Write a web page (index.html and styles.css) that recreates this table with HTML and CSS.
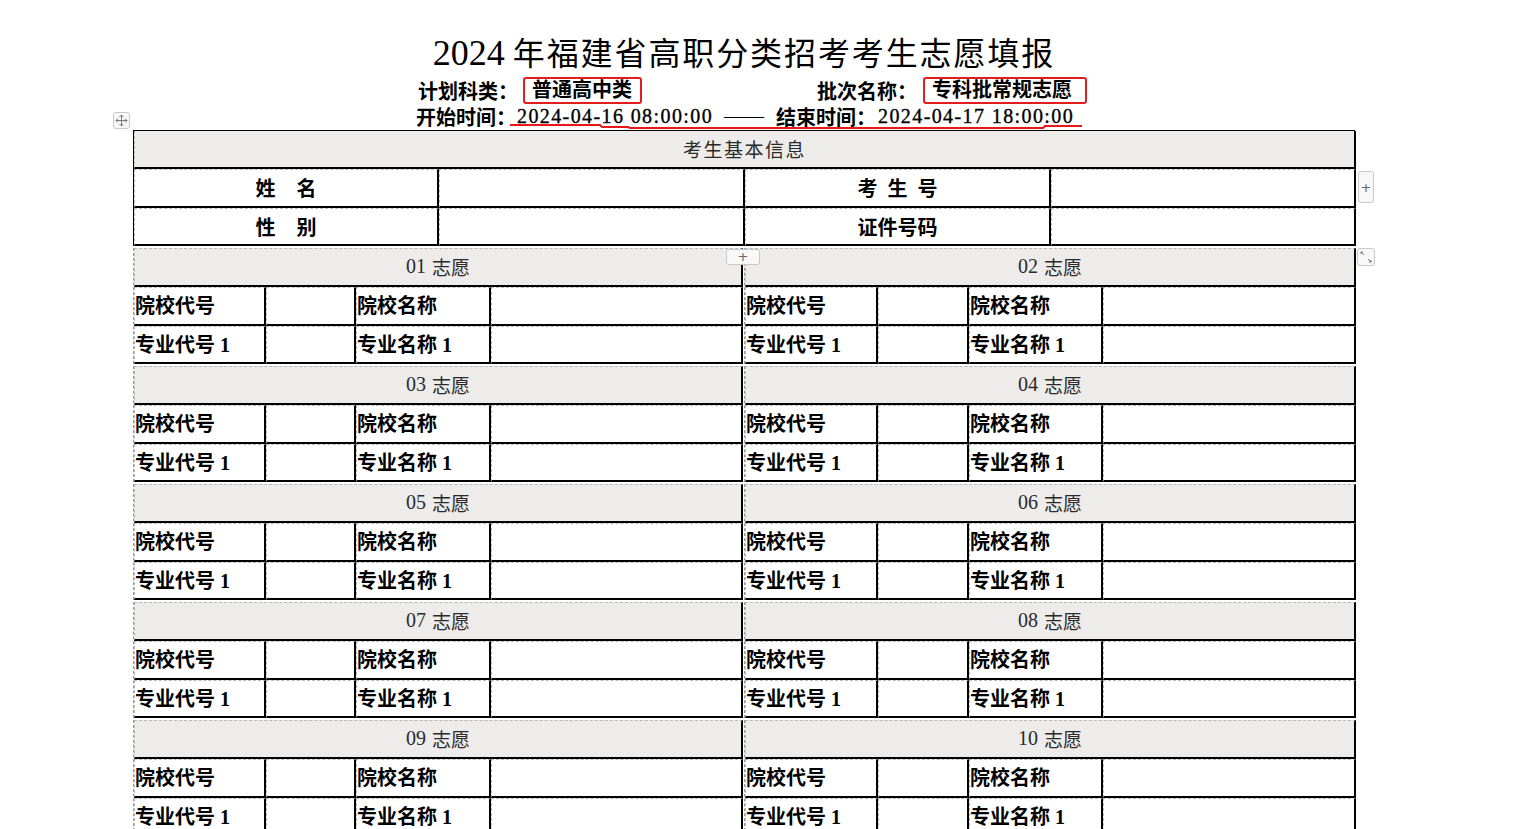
FILE: index.html
```html
<!DOCTYPE html>
<html lang="zh-CN">
<head>
<meta charset="utf-8">
<title>2024年福建省高职分类招考考生志愿填报</title>
<link rel="stylesheet" href="styles.css">
</head>
<body>
<div class="doc">
  <h1 class="title"><span class="num">2024</span> <span class="cjk">年福建省高职分类招考考生志愿填报</span></h1>
  <div class="line2">
    <span class="lbl">计划科类：</span><span class="box box1">普通高中类</span>
    <span class="lbl lbl2">批次名称：</span><span class="box box2">专科批常规志愿</span>
  </div>
  <div class="line3">
    <span class="lbl">开始时间：</span><span class="dt dt1">2024-04-16 08:00:00</span><span class="dash">——</span><span class="lbl lbl3">结束时间：</span><span class="dt dt2">2024-04-17 18:00:00</span>
  </div>

  <div class="info">
    <div class="c head span4">考生基本信息</div>
    <div class="c lab center">姓<span class="wide"></span>名</div>
    <div class="c"></div>
    <div class="c lab center spaced">考 生 号</div>
    <div class="c"></div>
    <div class="c lab center">性<span class="wide"></span>别</div>
    <div class="c"></div>
    <div class="c lab center">证件号码</div>
    <div class="c"></div>
  </div>

  <div class="wishes">
    <div class="wish left"><div class="c head span4"><span class="n">01</span><span>志愿</span></div><div class="c lab">院校代号</div><div class="c"></div><div class="c lab">院校名称</div><div class="c"></div><div class="c lab">专业代号 1</div><div class="c"></div><div class="c lab">专业名称 1</div><div class="c"></div></div>
    <div class="wish right"><div class="c head span4"><span class="n">02</span><span>志愿</span></div><div class="c lab">院校代号</div><div class="c"></div><div class="c lab">院校名称</div><div class="c"></div><div class="c lab">专业代号 1</div><div class="c"></div><div class="c lab">专业名称 1</div><div class="c"></div></div>
    <div class="wish left"><div class="c head span4"><span class="n">03</span><span>志愿</span></div><div class="c lab">院校代号</div><div class="c"></div><div class="c lab">院校名称</div><div class="c"></div><div class="c lab">专业代号 1</div><div class="c"></div><div class="c lab">专业名称 1</div><div class="c"></div></div>
    <div class="wish right"><div class="c head span4"><span class="n">04</span><span>志愿</span></div><div class="c lab">院校代号</div><div class="c"></div><div class="c lab">院校名称</div><div class="c"></div><div class="c lab">专业代号 1</div><div class="c"></div><div class="c lab">专业名称 1</div><div class="c"></div></div>
    <div class="wish left"><div class="c head span4"><span class="n">05</span><span>志愿</span></div><div class="c lab">院校代号</div><div class="c"></div><div class="c lab">院校名称</div><div class="c"></div><div class="c lab">专业代号 1</div><div class="c"></div><div class="c lab">专业名称 1</div><div class="c"></div></div>
    <div class="wish right"><div class="c head span4"><span class="n">06</span><span>志愿</span></div><div class="c lab">院校代号</div><div class="c"></div><div class="c lab">院校名称</div><div class="c"></div><div class="c lab">专业代号 1</div><div class="c"></div><div class="c lab">专业名称 1</div><div class="c"></div></div>
    <div class="wish left"><div class="c head span4"><span class="n">07</span><span>志愿</span></div><div class="c lab">院校代号</div><div class="c"></div><div class="c lab">院校名称</div><div class="c"></div><div class="c lab">专业代号 1</div><div class="c"></div><div class="c lab">专业名称 1</div><div class="c"></div></div>
    <div class="wish right"><div class="c head span4"><span class="n">08</span><span>志愿</span></div><div class="c lab">院校代号</div><div class="c"></div><div class="c lab">院校名称</div><div class="c"></div><div class="c lab">专业代号 1</div><div class="c"></div><div class="c lab">专业名称 1</div><div class="c"></div></div>
    <div class="wish left"><div class="c head span4"><span class="n">09</span><span>志愿</span></div><div class="c lab">院校代号</div><div class="c"></div><div class="c lab">院校名称</div><div class="c"></div><div class="c lab">专业代号 1</div><div class="c"></div><div class="c lab">专业名称 1</div><div class="c"></div></div>
    <div class="wish right"><div class="c head span4"><span class="n">10</span><span>志愿</span></div><div class="c lab">院校代号</div><div class="c"></div><div class="c lab">院校名称</div><div class="c"></div><div class="c lab">专业代号 1</div><div class="c"></div><div class="c lab">专业名称 1</div><div class="c"></div></div>
  </div>
</div>

<svg class="underline" width="1532" height="140" viewBox="0 0 1532 140">
  <polyline points="510,125 600,125 602,127 628,127 630,128 1043,128 1045,126 1082,126" fill="none" stroke="#e81818" stroke-width="2"/>
</svg>

<div class="handle move">
  <svg width="13" height="13" viewBox="0 0 13 13"><path d="M6.5 1v11M1 6.5h11M6.5 1l-2 2M6.5 1l2 2M6.5 12l-2-2M6.5 12l2-2M1 6.5l2-2M1 6.5l2 2M12 6.5l-2-2M12 6.5l-2 2" stroke="#777" stroke-width="1" fill="none"/></svg>
</div>
<div class="handle addcol">+</div>
<div class="handle addrow">+</div>
<div class="handle resize">
  <svg width="12" height="12" viewBox="0 0 12 12"><path d="M1 1l3 3M1 1h2M1 1v2M11 11l-3-3M11 11h-2M11 11v-2" stroke="#777" stroke-width="1" fill="none"/></svg>
</div>
</body>
</html>
```
FILE: styles.css
```css
html, body {
  margin: 0;
  padding: 0;
  background: #fff;
}
body {
  position: relative;
  width: 1532px;
  height: 829px;
  overflow: hidden;
  font-family: "Liberation Serif", "Noto Sans CJK SC", serif;
  color: #000;
}
.doc {
  width: 1222px;
  margin-left: 133px;
  padding-top: 33px;
}
.title {
  margin: 0;
  height: 40px;
  line-height: 40px;
  font-size: 32px;
  font-weight: normal;
  text-align: center;
  white-space: nowrap;
}
.title .num {
  font-size: 36px;
}
.title .cjk {
  letter-spacing: 1.9px;
}
.line2, .line3 {
  display: flex;
  align-items: center;
  font-size: 20px;
  font-weight: bold;
  height: 26px;
}
.line2 {
  margin-top: 4px;
  padding-left: 285px;
}
.line3 {
  padding-left: 283px;
}
.lbl {
  white-space: nowrap;
}
.box {
  box-sizing: border-box;
  height: 27px;
  line-height: 23px;
  border: 2px solid #e21d1d;
  border-radius: 3px;
  white-space: nowrap;
}
.box1 {
  margin-left: 5px;
  width: 119px;
  padding-left: 7px;
}
.lbl2 {
  margin-left: 175px;
}
.box2 {
  margin-left: 6px;
  width: 164px;
  padding-left: 7px;
}
.dt {
  font-family: "Liberation Serif", serif;
  font-size: 20px;
  font-weight: normal;
  letter-spacing: 1.4px;
  white-space: nowrap;
  -webkit-text-stroke: 0.35px #000;
}
.dt1 { margin-left: 1px; }
.dash { margin-left: 11px; font-weight: normal; letter-spacing: 0; }
.lbl3 { margin-left: 12px; }
.dt2 { margin-left: 2px; }

.info {
  margin-top: 1px;
  display: grid;
  grid-template-columns: 305px 306px 306px 305px;
  grid-template-rows: 38px 39px 38px;
  border-top: 1px solid #000;
  border-left: 1px solid #000;
}
.c {
  box-sizing: border-box;
  border-top: 1px dashed #b9b9b9;
  border-left: 1px dashed #b9b9b9;
  border-right: 2px solid #000;
  border-bottom: 2px solid #000;
  display: flex;
  align-items: center;
  overflow: hidden;
  white-space: nowrap;
}
.span4 { grid-column: span 4; }
.head {
  background: #edecea;
  justify-content: center;
  font-size: 19px;
  color: #2a2a2a;
  padding-bottom: 2px;
}
.head .n {
  font-size: 20px;
  margin-right: 6px;
}
.info .head {
  border-top: none;
  letter-spacing: 1.5px;
  padding-bottom: 2px;
}
.lab {
  font-size: 20px;
  font-weight: bold;
  padding-left: 0;
  padding-bottom: 3px;
}
.info .lab { padding-bottom: 1px; }
.center { justify-content: center; }
.wide { display: inline-block; width: 21px; }
.spaced { word-spacing: 5px; }

.wishes {
  margin-top: 2px;
  display: grid;
  grid-template-columns: 609px 611px;
  column-gap: 2px;
  row-gap: 2px;
}
.wish {
  display: grid;
  grid-template-rows: 39px 39px 38px;
  border-left: 1px dashed #999;
}
.wish.left {
  grid-template-columns: 132px 90px 135px 252px;
}
.wish.right {
  grid-template-columns: 133px 91px 134px 253px;
  border-right: 1px solid #000;
}

.underline {
  position: absolute;
  left: 0;
  top: 0;
  pointer-events: none;
}
.handle {
  position: absolute;
  box-sizing: border-box;
  border: 1px solid #c9c9c9;
  border-radius: 3px;
  background: #f8f8f8;
  display: flex;
  align-items: center;
  justify-content: center;
  color: #666;
  font-family: "DejaVu Sans", sans-serif;
  font-size: 13px;
}
.move {
  left: 113px;
  top: 112px;
  width: 17px;
  height: 17px;
}
.addcol {
  left: 1358px;
  top: 171px;
  width: 16px;
  height: 32px;
}
.addrow {
  left: 726px;
  top: 249px;
  width: 34px;
  height: 16px;
  line-height: 14px;
}
.resize {
  left: 1357px;
  top: 248px;
  width: 18px;
  height: 18px;
}
```
